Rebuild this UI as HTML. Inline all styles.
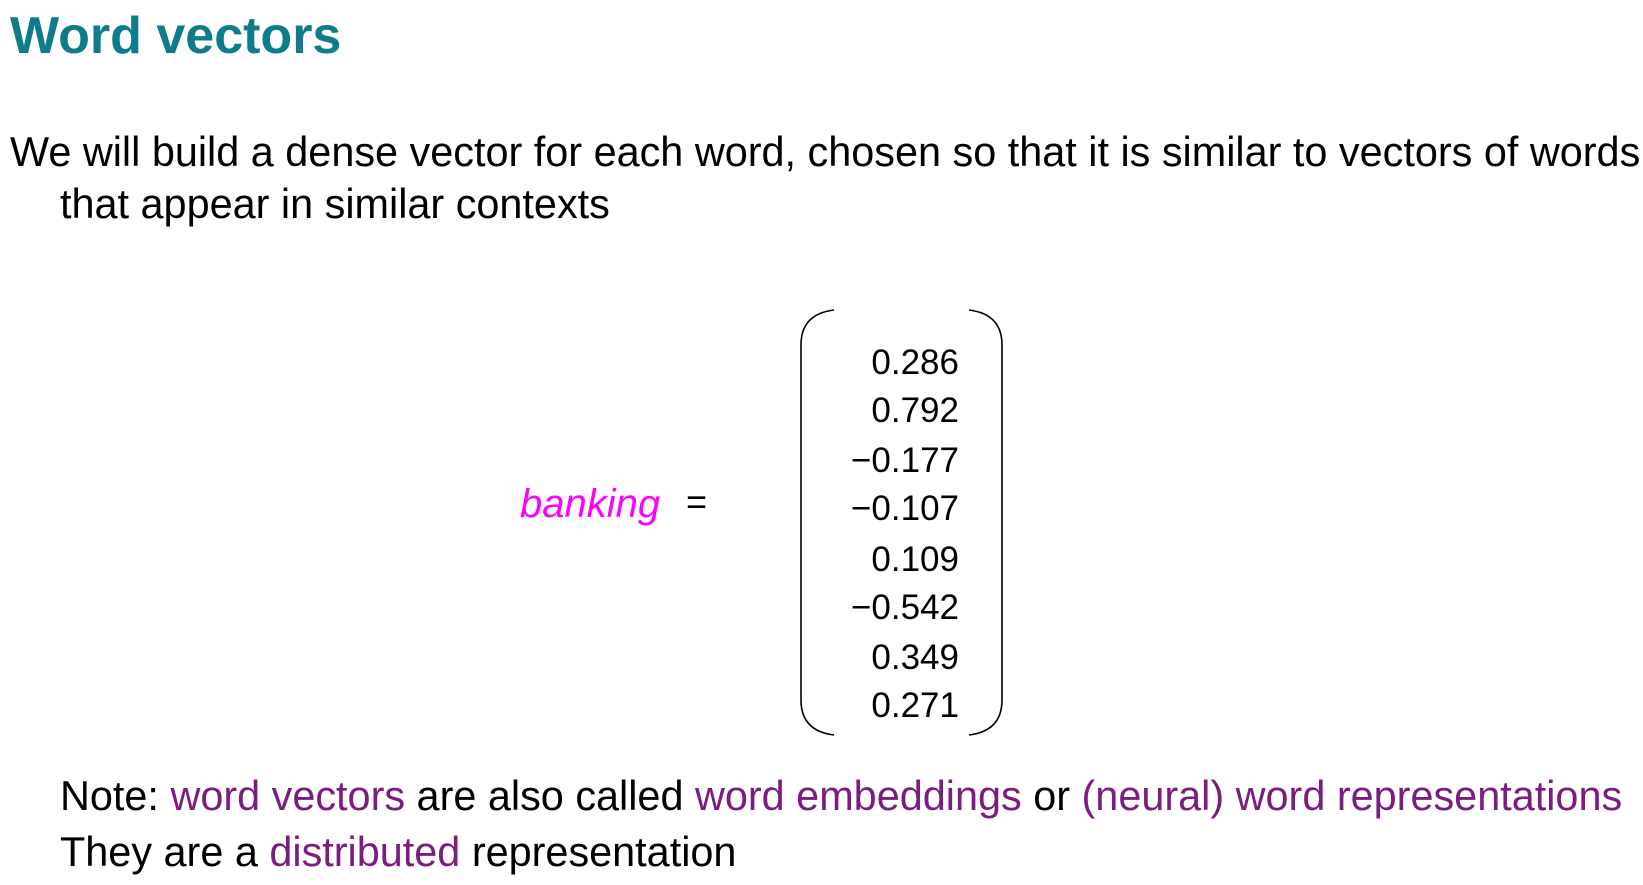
<!DOCTYPE html>
<html><head><meta charset="utf-8"><style>
body{margin:0;width:1643px;height:885px;background:#fff;position:relative;overflow:hidden;font-family:"Liberation Sans",sans-serif;color:#000}
.t{position:absolute;white-space:nowrap;line-height:1}
.p{color:#7b1c80}
.n{position:absolute;right:684px;font-size:35px;line-height:1;white-space:nowrap}
</style></head><body>
<div class="t" style="left:10px;top:10px;font-size:52px;font-weight:bold;color:#0f7c8b">Word vectors</div>
<div class="t" style="left:10px;top:132px;font-size:41.4px">We will build a dense vector for each word, chosen so that it is similar to vectors of words</div>
<div class="t" style="left:60px;top:184px;font-size:41.4px">that appear in similar contexts</div>
<div class="t" style="left:520px;top:484px;font-size:40px;font-style:italic;color:#ff00ff">banking</div>
<div class="t" style="left:686px;top:484px;font-size:36px">=</div>
<svg style="position:absolute;left:0;top:0" width="1643" height="885">
<path d="M834 310 Q801 314 801 345 L801 700 Q801 731 834 735" fill="none" stroke="#000" stroke-width="1.6"/>
<path d="M969 310 Q1002 314 1002 345 L1002 700 Q1002 731 969 735" fill="none" stroke="#000" stroke-width="1.6"/>
</svg>
<div class="n" style="top:345px">0.286</div>
<div class="n" style="top:393px">0.792</div>
<div class="n" style="top:443px">−0.177</div>
<div class="n" style="top:491px">−0.107</div>
<div class="n" style="top:542px">0.109</div>
<div class="n" style="top:590px">−0.542</div>
<div class="n" style="top:640px">0.349</div>
<div class="n" style="top:688px">0.271</div>
<div class="t" style="left:60px;top:776px;font-size:41.4px">Note: <span class="p">word vectors</span> are also called <span class="p">word embeddings</span> or <span class="p">(neural) word representations</span></div>
<div class="t" style="left:60px;top:832px;font-size:41.4px">They are a <span class="p">distributed</span> representation</div>
</body></html>
